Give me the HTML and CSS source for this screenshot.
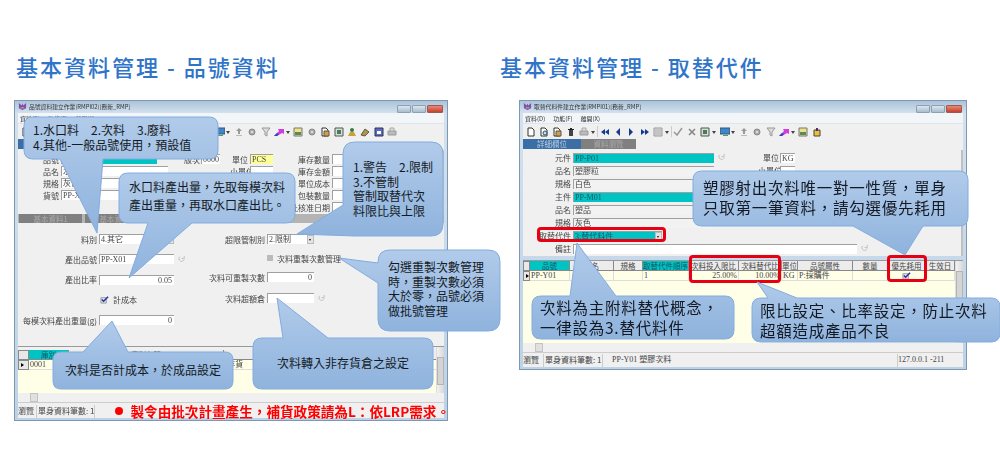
FILE: index.html
```html
<!DOCTYPE html>
<html>
<head>
    <meta charset="utf-8">
    <title>基本資料管理</title>
    <link rel="stylesheet" href="styles.css">
</head>
<body>
    <svg class="defs" width="0" height="0">
        <defs>
            <linearGradient id="bubble" x1="0" y1="0" x2="0" y2="1">
                <stop offset="0" stop-color="#b1cbea"/>
                <stop offset="1" stop-color="#8fb3dd"/>
            </linearGradient>
            <symbol id="logo" viewBox="0 0 10 10"><path d="M1 1l3 3 1-2 1 2 3-3v6l-4 2-4-2z" fill="#7b4fb0"/><path d="M3 6h4v1H3z" fill="#e8c04a"/></symbol>
            <symbol id="doc" viewBox="0 0 10 10"><path d="M2 1h4l2 2v6H2z" fill="#fff" stroke="#333"/></symbol>
            <symbol id="docq" viewBox="0 0 10 10"><path d="M2 1h4l2 2v6H2z" fill="#fff" stroke="#333"/><circle cx="6" cy="6" r="2" fill="#cde" stroke="#256"/></symbol>
            <symbol id="docb" viewBox="0 0 10 10"><path d="M2 1h4l2 2v6H2z" fill="#fff" stroke="#333"/><path d="M4 4h5v5H4z" fill="#c9a24a" stroke="#654"/></symbol>
            <symbol id="trash" viewBox="0 0 10 10"><path d="M3 3h4v6H3z" fill="#444"/><path d="M2 2h6v1H2zM4 1h2v1H4z" fill="#222"/></symbol>
            <symbol id="print" viewBox="0 0 10 10"><path d="M1 4h8v4H1z" fill="#bbb" stroke="#999"/><path d="M3 1h4v3H3z" fill="#ddd" stroke="#aaa"/></symbol>
            <symbol id="first" viewBox="0 0 10 10"><path d="M5 2v6L1 5zM9 2v6L5 5z" fill="#163a8c"/></symbol>
            <symbol id="prev" viewBox="0 0 10 10"><path d="M7 1v8L3 5z" fill="#163a8c"/></symbol>
            <symbol id="next" viewBox="0 0 10 10"><path d="M3 1v8l4-4z" fill="#163a8c"/></symbol>
            <symbol id="last" viewBox="0 0 10 10"><path d="M1 2v6l4-3zM5 2v6l4-3z" fill="#163a8c"/></symbol>
            <symbol id="form" viewBox="0 0 10 10"><path d="M1 1h8v8H1z" fill="#ddd" stroke="#999"/><path d="M2 3h6M2 5h6M2 7h6" stroke="#aaa"/></symbol>
            <symbol id="check" viewBox="0 0 10 10"><path d="M1 5l3 3 5-7" fill="none" stroke="#999" stroke-width="1.5"/></symbol>
            <symbol id="cross" viewBox="0 0 10 10"><path d="M2 2l6 6M8 2l-6 6" stroke="#888" stroke-width="1.6"/></symbol>
            <symbol id="img" viewBox="0 0 10 10"><path d="M1 1h8v8H1z" fill="#cfe3d4" stroke="#555"/><path d="M3 3h4v4H3z" fill="#4a7a5a"/></symbol>
            <symbol id="mon" viewBox="0 0 10 10"><path d="M0 1h10v6H0z" fill="#3f86c8" stroke="#357"/><path d="M3 8h5v1H3z" fill="#4a9a6a"/></symbol>
            <symbol id="arrow" viewBox="0 0 10 10"><path d="M5 1l3 3H6v3H4V4H2z" fill="#999"/><path d="M2 8h6v1H2z" fill="#bbb"/></symbol>
            <symbol id="gear" viewBox="0 0 10 10"><circle cx="5" cy="5" r="3" fill="#aaa" stroke="#888"/><circle cx="5" cy="5" r="1" fill="#eee"/></symbol>
            <symbol id="funnel" viewBox="0 0 10 10"><path d="M1 1h8L6 5v4L4 8V5z" fill="#ddd" stroke="#999"/></symbol>
            <symbol id="pink" viewBox="0 0 10 10"><path d="M0 9l5-5-1-2h6v5L8 6 3 9z" fill="#d23be0"/><path d="M0 9l3-3 2 1-2 2z" fill="#2a45c8"/></symbol>
            <symbol id="note" viewBox="0 0 10 10"><path d="M1 1h8v8H1z" fill="#efe08a" stroke="#777"/><path d="M2 5h6v3H2z" fill="#5a8a5a"/></symbol>
            <symbol id="bag" viewBox="0 0 10 10"><path d="M2 3h6v6H2z" fill="#e6c23c" stroke="#543"/><path d="M4 1h2v3H4z" fill="#532a7a"/></symbol>
            <symbol id="key" viewBox="0 0 10 10"><path d="M1 8l4-6 4 3-4 4z" fill="#a89a4a" stroke="#654"/></symbol>
            <symbol id="user" viewBox="0 0 10 10"><circle cx="5" cy="3" r="2" fill="#3a7a4a"/><path d="M1 9l2-4h4l2 4z" fill="#c8a23a"/></symbol>
            <symbol id="cal" viewBox="0 0 10 10"><path d="M1 1h8v8H1z" fill="#5a6ac8" stroke="#335"/><path d="M3 4h4v3H3z" fill="#fff"/></symbol>
            <symbol id="redo" viewBox="0 0 10 10"><path d="M3 2a3 3 0 1 0 5 3" fill="none" stroke="#bbb"/><path d="M8 1v3H5" fill="none" stroke="#bbb"/></symbol>
            <symbol id="tick" viewBox="0 0 10 10"><path d="M1 3h6v6H1z" fill="#dfe3ee" stroke="#999"/><path d="M2 5l2 2 5-5" fill="none" stroke="#22329c" stroke-width="1.6"/></symbol>
        </defs>
    </svg>

    <main class="page">
        <section class="panel panel-a">
            <h1>基本資料管理 - 品號資料</h1>
            <div class="win win-a">
                <div class="win-body">
                    <div class="titlebar">
                        <svg class="tb-logo"><use href="#logo"/></svg>
                        <span>品號資料建立作業(RMPI02)[務新_RMP]</span>
                        <div class="win-btns"><i></i><i></i><i class="close"></i></div>
                    </div>
                    <div class="menu"><span>資料(D)</span><span>功能(F)</span><span>離開(X)</span></div>
                    <div class="toolbar">
                        <svg><use href="#doc"/></svg><svg><use href="#docq"/></svg><svg><use href="#docb"/></svg><svg><use href="#trash"/></svg><svg><use href="#print"/></svg><b></b><s></s>
                        <svg><use href="#first"/></svg><svg><use href="#prev"/></svg><svg><use href="#next"/></svg><svg><use href="#last"/></svg><svg><use href="#form"/></svg><b></b><s></s>
                        <svg><use href="#check"/></svg><svg><use href="#cross"/></svg><svg><use href="#img"/></svg><b></b><svg><use href="#mon"/></svg><b></b>
                        <svg><use href="#arrow"/></svg><svg><use href="#gear"/></svg><svg><use href="#funnel"/></svg><svg><use href="#pink"/></svg><b></b>
                        <svg><use href="#note"/></svg><svg><use href="#gear"/></svg><svg><use href="#docb"/></svg><svg><use href="#img"/></svg><svg><use href="#user"/></svg><svg><use href="#key"/></svg><svg><use href="#cal"/></svg><svg><use href="#print"/></svg>
                    </div>
                    <div class="tabs"><span class="tab on">詳細欄位</span></div>

                    <div class="top-a">
                        <div class="col col-name">
                            <div class="row"><label>品號</label><em class="field teal f-no">PP-X01</em></div>
                            <div class="row"><label>品名</label><em class="field f-name">水口料</em></div>
                            <div class="row"><label>規格</label><em class="field f-name">灰色</em></div>
                            <div class="row"><label>貨號</label><em class="field f-name">PP-X01</em></div>
                        </div>
                        <div class="col col-ver">
                            <div class="row"><label>版次</label><em class="field f-ver">0000</em></div>
                        </div>
                        <div class="col col-unit">
                            <div class="row"><label>單位</label><em class="field yellow f-unit">PCS</em></div>
                            <div class="row"><label>小單位</label><em class="field f-unit"></em></div>
                        </div>
                        <div class="col col-stock">
                            <div class="row"><label>庫存數量</label><em class="field f-stock"></em></div>
                            <div class="row"><label>庫存金額</label><em class="field f-stock"></em></div>
                            <div class="row"><label>單位成本</label><em class="field f-stock"></em></div>
                            <div class="row"><label>包裝數量</label><em class="field f-stock"></em></div>
                            <div class="row"><label>批核准日期</label><em class="field f-stock"></em></div>
                        </div>
                    </div>

                    <div class="tabs-low">
                        <span class="tab-low">基本資料1</span>
                        <span class="tab-low">基本資料2</span>
                    </div>

                    <div class="low-a">
                        <div class="low-left">
                            <div class="row"><label>料別</label><em class="field f-low drop">4.其它<u></u></em></div>
                            <div class="row"><label>產出品號</label><em class="field f-low">PP-X01</em><svg class="redo"><use href="#redo"/></svg></div>
                            <div class="row"><label>產出比率</label><em class="field f-low num">0.05</em></div>
                            <div class="row"><label></label><svg class="tick"><use href="#tick"/></svg><span class="chk-text">計成本</span></div>
                            <div class="row"><label>每模次料產出重量(g)</label><em class="field f-low num">0</em></div>
                        </div>
                        <div class="low-right">
                            <div class="row"><label>超限管制別</label><em class="field f-side drop">2.限制<u></u></em></div>
                            <div class="row"><label></label><i class="box"></i><span class="chk-text">次料重製次數管理</span></div>
                            <div class="row"><label>次料可重製次數</label><em class="field f-side num">0</em></div>
                            <div class="row gap-up"><label>次料超額倉</label><em class="field f-side"></em><svg class="redo"><use href="#redo"/></svg></div>
                        </div>
                    </div>

                    <div class="sheet sheet-a">
                        <div class="cells cells-a">
                            <span class="corner"></span><span class="th teal-th">庫別</span><span class="th">庫別名稱</span><span class="th"></span>
                            <span class="corner mark"></span><span class="td">0001</span><span class="td"></span><span class="td">:存貨</span>
                        </div>
                        <div class="sheet-fill"></div>
                        <div class="vscroll"></div>
                    </div>
                    <div class="hscroll"><i></i></div>
                    <div class="status">
                        <span class="st st-mode">瀏覽</span>
                        <span class="st st-count">單身資料筆數: 1</span>
                        <span class="alert"><i></i>製令由批次計畫產生，補貨政策請為L：依LRP需求。</span>
                    </div>
                </div>

                <svg class="bubbles" viewBox="0 0 486 321" width="486" height="321">
                    <path d="M19 17H195Q204 17 204 26V50Q204 59 195 59H89L83 133L46 59H19Q10 59 10 50V26Q10 17 19 17Z"/>
                    <path d="M114 73H272Q281 73 281 82V114Q281 123 272 123H178L115 178L134 123H114Q105 123 105 114V82Q105 73 114 73Z"/>
                    <path d="M341 42H417Q429 42 429 54V124Q429 136 417 136H341L283 134L329 105V54Q329 42 341 42Z"/>
                    <path d="M376 150H474Q486 150 486 162V219Q486 231 474 231H376Q364 231 364 219V183L325 158L364 163V162Q364 150 376 150Z"/>
                    <path d="M248 238H269L263 198L314 238H410Q419 238 419 247V280Q419 289 410 289H248Q239 289 239 280V247Q239 238 248 238Z"/>
                    <path d="M47 252H69L98 221L114 252H211Q219 252 219 260V281Q219 289 211 289H47Q39 289 39 281V260Q39 252 47 252Z"/>
                </svg>
                <p class="note n1">1.水口料　2.次料　3.廢料<br>4.其他-一般品號使用，預設值</p>
                <p class="note n2">水口料產出量，先取每模次料<br>產出重量，再取水口產出比。</p>
                <p class="note n3">1.警告　2.限制<br>3.不管制<br>管制取替代次<br>料限比與上限</p>
                <p class="note n4">勾選重製次數管理<br>時，重製次數必須<br>大於零，品號必須<br>做批號管理</p>
                <p class="note n5">次料轉入非存貨倉之設定</p>
                <p class="note n6">次料是否計成本，於成品設定</p>
            </div>
        </section>

        <section class="panel panel-b">
            <h1>基本資料管理 - 取替代件</h1>
            <div class="win win-b">
                <div class="win-body">
                    <div class="titlebar">
                        <svg class="tb-logo"><use href="#logo"/></svg>
                        <span>取替代料件建立作業(RMPI01)[務新_RMP]</span>
                        <div class="win-btns"><i></i><i></i><i class="close"></i></div>
                    </div>
                    <div class="menu"><span>資料(D)</span><span>功能(F)</span><span>離開(X)</span></div>
                    <div class="toolbar">
                        <svg><use href="#doc"/></svg><svg><use href="#docq"/></svg><svg><use href="#docb"/></svg><svg><use href="#trash"/></svg><svg><use href="#print"/></svg><b></b><s></s>
                        <svg><use href="#first"/></svg><svg><use href="#prev"/></svg><svg><use href="#next"/></svg><svg><use href="#last"/></svg><svg><use href="#form"/></svg><b></b><s></s>
                        <svg><use href="#check"/></svg><svg><use href="#cross"/></svg><svg><use href="#img"/></svg><b></b><svg><use href="#mon"/></svg><b></b>
                        <svg><use href="#arrow"/></svg><svg><use href="#gear"/></svg><svg><use href="#funnel"/></svg><svg><use href="#pink"/></svg><b></b>
                        <svg><use href="#note"/></svg><svg><use href="#bag"/></svg>
                    </div>
                    <div class="tabs"><span class="tab on">詳細欄位</span><span class="tab">資料瀏覽</span></div>

                    <div class="top-b">
                        <div class="row"><label>元件</label><em class="field teal f-part">PP-P01</em><svg class="redo"><use href="#redo"/></svg><label class="unit">單位</label><em class="field f-kg">KG</em></div>
                        <div class="row"><label>品名</label><em class="field ro f-part">塑膠粒</em><label class="unit unit-sm">小單位</label><em class="field f-kg"></em></div>
                        <div class="row"><label>規格</label><em class="field ro f-part">白色</em></div>
                        <div class="row"><label>主件</label><em class="field teal f-part">PP-M01</em></div>
                        <div class="row"><label>品名</label><em class="field ro f-part">塑品</em></div>
                        <div class="row"><label>規格</label><em class="field ro f-part">灰色</em></div>
                        <div class="row"><label>取替代件</label><em class="field teal f-type drop">3:替代料件<u></u></em></div>
                        <div class="row"><label>備註</label><em class="field f-memo"></em><svg class="redo"><use href="#redo"/></svg></div>
                    </div>

                    <div class="sheet sheet-b">
                        <div class="cells cells-b">
                            <span class="corner"></span>
                            <span class="th teal-th">品號</span>
                            <span class="th">品名</span>
                            <span class="th">規格</span>
                            <span class="th teal-th">取替代件順序</span>
                            <span class="th">次料投入限比</span>
                            <span class="th">次料替代比</span>
                            <span class="th">單位</span>
                            <span class="th">品號屬性</span>
                            <span class="th">數量</span>
                            <span class="th">優先耗用</span>
                            <span class="th">生效日</span>
                            <span class="corner mark"></span>
                            <span class="td">PP-Y01</span>
                            <span class="td"></span>
                            <span class="td"></span>
                            <span class="td">1</span>
                            <span class="td num">25.00%</span>
                            <span class="td num">10.00%</span>
                            <span class="td">KG</span>
                            <span class="td">P:採購件</span>
                            <span class="td"></span>
                            <span class="td mid"><svg class="tick"><use href="#tick"/></svg></span>
                            <span class="td"></span>
                        </div>
                        <div class="sheet-fill"></div>
                        <div class="vscroll"></div>
                    </div>
                    <div class="hscroll"><i></i></div>
                    <div class="status">
                        <span class="st st-mode">瀏覽</span>
                        <span class="st st-count">單身資料筆數: 1</span>
                        <span class="st st-item">PP-Y01 塑膠次料</span>
                        <span class="st st-ip">127.0.0.1 -211</span>
                    </div>
                </div>

                <div class="redbox r1"></div>
                <div class="redbox r2"></div>
                <div class="redbox r3"></div>
                <svg class="bubbles" viewBox="0 0 481 272" width="481" height="272">
                    <path d="M183 71H440Q449 71 449 80V117Q449 126 440 126H404L386 155L334 126H183Q174 126 174 117V80Q174 71 183 71Z"/>
                    <path d="M22 196H51L58 143L97 196H206Q215 196 215 205V230Q215 239 206 239H22Q13 239 13 230V205Q13 196 22 196Z"/>
                    <path d="M242 198H249L238 182L278 198H472Q481 198 481 207V233Q481 242 472 242H242Q233 242 233 233V207Q233 198 242 198Z"/>
                </svg>
                <p class="note big n7">塑膠射出次料唯一對一性質，單身<br>只取第一筆資料，請勾選優先耗用</p>
                <p class="note big n8">次料為主附料替代概念，<br>一律設為3.替代料件</p>
                <p class="note big n9">限比設定、比率設定，防止次料<br>超額造成產品不良</p>
            </div>
        </section>
    </main>
</body>
</html>
```

FILE: styles.css
```css
* { box-sizing: border-box; }
html, body { margin: 0; background: #fff; }
body { font-family: "Noto Sans CJK TC", "Liberation Sans", sans-serif; width: 1000px; height: 450px; overflow: hidden; }
.defs { position: absolute; }

.page { display: flex; padding: 0 0 0 14px; }
.panel-a { width: 486px; }
.panel-b { width: 490px; }
.panel h1 { margin: 0; height: 100px; padding-top: 50px; font-size: 22px; line-height: 32px; font-weight: 500; letter-spacing: 2px; color: #2f74c8; white-space: pre; }
.panel-a h1 { padding-left: 2px; }
.panel-b .win { margin-left: 19px; }

/* window */
.win { position: relative; padding: 0 4px 4px; background: linear-gradient(#a8c0d8, #d3e1ee 13px, #bcd2e6); box-shadow: inset 0 0 0 1px #7d98b0; }
.win-a { width: 434px; height: 321px; }
.win-b { width: 448px; height: 270px; }
.win-body { height: 100%; display: flex; flex-direction: column; filter: blur(.35px); }

.titlebar { height: 13px; flex: none; display: flex; align-items: center; gap: 2px; font-size: 5.8px; color: #333; }
.tb-logo { width: 9px; height: 9px; }
.win-btns { margin-left: auto; display: flex; gap: 1px; margin-top: 4px; margin-right: 1px; }
.win-btns i { width: 14px; height: 8px; border: 1px solid #8aa0b5; background: linear-gradient(#dde6ee, #a9bccd); border-radius: 1px; }
.win-btns .close { width: 16px; background: linear-gradient(#e68a78, #c8402e); border-color: #a0574c; }

.menu { height: 10px; flex: none; display: flex; gap: 8px; padding-left: 2px; align-items: center; background: #f3f6f9; font-size: 6px; color: #333; }

.toolbar { height: 16px; flex: none; display: flex; align-items: center; padding-left: 1px; background: #f0f0f0; border-top: 1px solid #dfe5ea; }
.toolbar svg { width: 10px; height: 10px; margin: 0 1.7px; flex: none; }
.toolbar b { width: 0; height: 0; flex: none; margin: 1px 2px 0 0; border: 2px solid transparent; border-top: 3px solid #444; border-bottom: 0; }
.toolbar s { width: 1px; height: 11px; flex: none; background: #ccc; }

.tabs { height: 11px; flex: none; display: flex; padding-left: 0; background: #f0f0f0; }
.tab { width: 55px; height: 10px; text-align: center; font-size: 7.5px; line-height: 10px; background: #808080; color: #aaa; }
.tab.on { width: 58px; background: #3a6ea5; color: #b9cde2; }

.row { display: flex; align-items: center; flex: none; }
.row label { flex: none; text-align: right; font-size: 8px; color: #444; white-space: nowrap; }
.field { flex: none; display: block; height: 10px; margin-left: 2px; padding: 0 1px; font-style: normal; font-family: "Liberation Serif", "Noto Sans CJK TC", serif; font-size: 8px; line-height: 10px; color: #444; background: #fff; border-top: 1px solid #a0a0a0; border-left: 1px solid #a0a0a0; white-space: nowrap; overflow: hidden; }
.field.teal { background: #00c4c4; color: #156; }
.field.yellow { background: #ffff99; }
.field.ro { background: #f2f2f2; }
.field.num { text-align: right; padding-right: 2px; }
.field.drop { position: relative; }
.field.drop u { position: absolute; right: 0; top: 0; width: 7px; height: 9px; background: #e4e4e4; border: 1px solid #bbb; }
.field.drop u::after { content: ""; position: absolute; left: 1px; top: 3px; border: 1.5px solid transparent; border-top: 2px solid #111; border-bottom: 0; }
.redo { width: 9px; height: 9px; margin-left: 3px; flex: none; }
.tick { width: 9px; height: 9px; flex: none; }
.box { width: 6px; height: 6px; margin-left: 2px; flex: none; background: #bbb; }
.chk-text { margin-left: 4px; font-size: 8px; color: #444; white-space: nowrap; }

/* 品號資料 form */
.top-a { height: 64px; flex: none; display: flex; padding-top: 3px; background: #f0f0f0; border-right: 2px solid #c0c0c0; overflow: hidden; }
.top-a .col .row { height: 12px; }
.col-name { width: 166px; }
.col-name label { width: 41px; }
.f-no { width: 96px; }
.f-name { width: 107px; }
.col-ver { width: 46px; }
.col-ver label { width: 15px; }
.f-ver { width: 19px; }
.col-unit { width: 58px; }
.col-unit label { width: 18px; }
.f-unit { width: 23px; }
.col-stock { width: 90px; }
.col-stock label { width: 42px; text-align: right; }
.f-stock { width: 28px; }

.tabs-low { height: 9px; flex: none; display: flex; gap: 3px; padding-left: 1px; background: #b4b4b4; }
.tab-low { width: 63px; text-align: center; font-size: 7.5px; line-height: 9px; background: #808080; color: #aaa; }

.low-a { height: 123px; flex: none; display: flex; padding-top: 11px; background: #f0f0f0; }
.low-left { width: 187px; display: flex; flex-direction: column; gap: 10.25px; }
.low-left .row { height: 10px; }
.low-left label { width: 79px; }
.low-left .tick { margin-left: 3px; }
.f-low { width: 75px; }
.low-right { display: flex; flex-direction: column; gap: 9px; }
.low-right .row { height: 10px; }
.low-right .gap-up { margin-top: 2px; }
.low-right label { width: 60px; }
.f-side { width: 47px; }

/* grids */
.sheet { position: relative; flex: none; overflow: hidden; display: flex; flex-direction: column; }
.sheet-a { height: 47px; padding-top: 3px; background: #f0f0f0; border-top: 1px solid #999; }
.sheet-b { height: 83px; margin-top: 4px; border-top: 1px solid #999; }
.sheet-fill { flex: 1; background: #ffffe8; }
.cells { display: grid; grid-auto-rows: 10px; background: #ffffe8; }
.cells-a { grid-template-columns: 11px 40px 155px 220px; }
.cells-b { grid-template-columns: 7px 40px 44px 29px 46px 50px 43px 16px 55px 35px 38px 29px; }
.corner { background: #e8e8e8; border: 1px solid #888; }
.corner.mark { position: relative; }
.corner.mark::after { content: ""; position: absolute; left: 2px; top: 2px; border: 2px solid transparent; border-left: 3px solid #000; border-right: 0; }
.th { font-size: 7.5px; line-height: 9px; text-align: center; white-space: nowrap; color: #444; background: #ececec; border: 1px solid #888; border-width: 0 1px 1px 0; }
.teal-th { background: #00c4c4; color: #156; }
.td { font-family: "Liberation Serif", "Noto Sans CJK TC", serif; font-size: 8px; line-height: 10px; padding: 0 1px; color: #444; white-space: nowrap; overflow: hidden; border-right: 1px solid #ddd; border-bottom: 1px solid #ddd; }
.td.num { text-align: right; }
.td.mid { display: flex; justify-content: center; align-items: center; }
.vscroll { position: absolute; top: 0; right: 0; width: 8px; height: 100%; background: linear-gradient(90deg, #f2f2f2, #d8d8d8); border-left: 1px solid #ddd; }
.vscroll::after { content: ""; position: absolute; left: 0; right: 0; top: 10px; height: 26px; background: #d4d4d4; border: 1px solid #b4b4b4; }
.hscroll { height: 9px; flex: none; padding-left: 12px; background: #f0f0f0; }
.hscroll i { display: block; width: 8px; height: 9px; background: #e0e0e0; border: 1px solid #c4c4c4; }

.status { flex: 1; display: flex; align-items: center; gap: 2px; padding-top: 1px; background: #f0f0f0; font-size: 8px; color: #444; border-top: 1px solid #ccc; white-space: nowrap; }
.st { display: block; height: 13px; line-height: 12px; }
.st-mode { width: 18px; }
.st-count { width: 60px; padding-left: 1px; border-left: 1px solid #ccc; border-right: 1px solid #ccc; }
.st-item { margin-left: 7px; font-family: "Liberation Serif", "Noto Sans CJK TC", serif; width: 283px; }
.st-ip { font-family: "Liberation Serif", "Noto Sans CJK TC", serif; border-left: 1px solid #ccc; }
.alert { display: flex; align-items: center; margin-left: 18px; font-size: 13.6px; font-weight: 700; line-height: 14px; color: #f00; }
.alert i { width: 8px; height: 8px; margin-right: 7px; border-radius: 50%; background: #f00; flex: none; }

/* 取替代件 form */
.top-b { height: 106px; flex: none; padding-top: 1px; background: #f0f0f0; border-right: 2px solid #c0c0c0; display: flex; flex-direction: column; }
.top-b .row { height: 13px; }
.top-b .row label { width: 48px; }
.top-b .row .unit { width: 15px; margin-left: 37px; }
.top-b .row .unit-sm { width: 20px; margin-left: 44px; }
.f-part { width: 141px; }
.f-kg { width: 15px; }
.f-type { width: 89px; }
.f-memo { width: 284px; }

/* call-outs */
.bubbles { position: absolute; left: 0; top: 0; overflow: visible; pointer-events: none; }
.bubbles path { fill: url(#bubble); stroke: #82ace0; stroke-width: 1; }
.note { position: absolute; margin: 0; font-size: 12px; line-height: 14.5px; color: #141a24; white-space: nowrap; }
.note.big { font-size: 15.5px; line-height: 20px; letter-spacing: .75px; }
.n1 { left: 19px; top: 22px; line-height: 15px; }
.n2 { left: 115px; top: 78px; line-height: 18px; }
.n3 { left: 339px; top: 60px; }
.n4 { left: 374px; top: 160px; }
.n5 { left: 263px; top: 256px; }
.n6 { left: 51px; top: 263px; }
.n7 { left: 184px; top: 77px; }
.n8 { left: 21px; top: 197px; }
.n9 { left: 241px; top: 200px; line-height: 19px; }

.redbox { position: absolute; border: 3px solid #e60012; border-radius: 4px; }
.r1 { left: 18px; top: 127px; width: 129px; height: 15px; }
.r2 { left: 170px; top: 155px; width: 92px; height: 28px; }
.r3 { left: 368px; top: 155px; width: 40px; height: 27px; }
```
